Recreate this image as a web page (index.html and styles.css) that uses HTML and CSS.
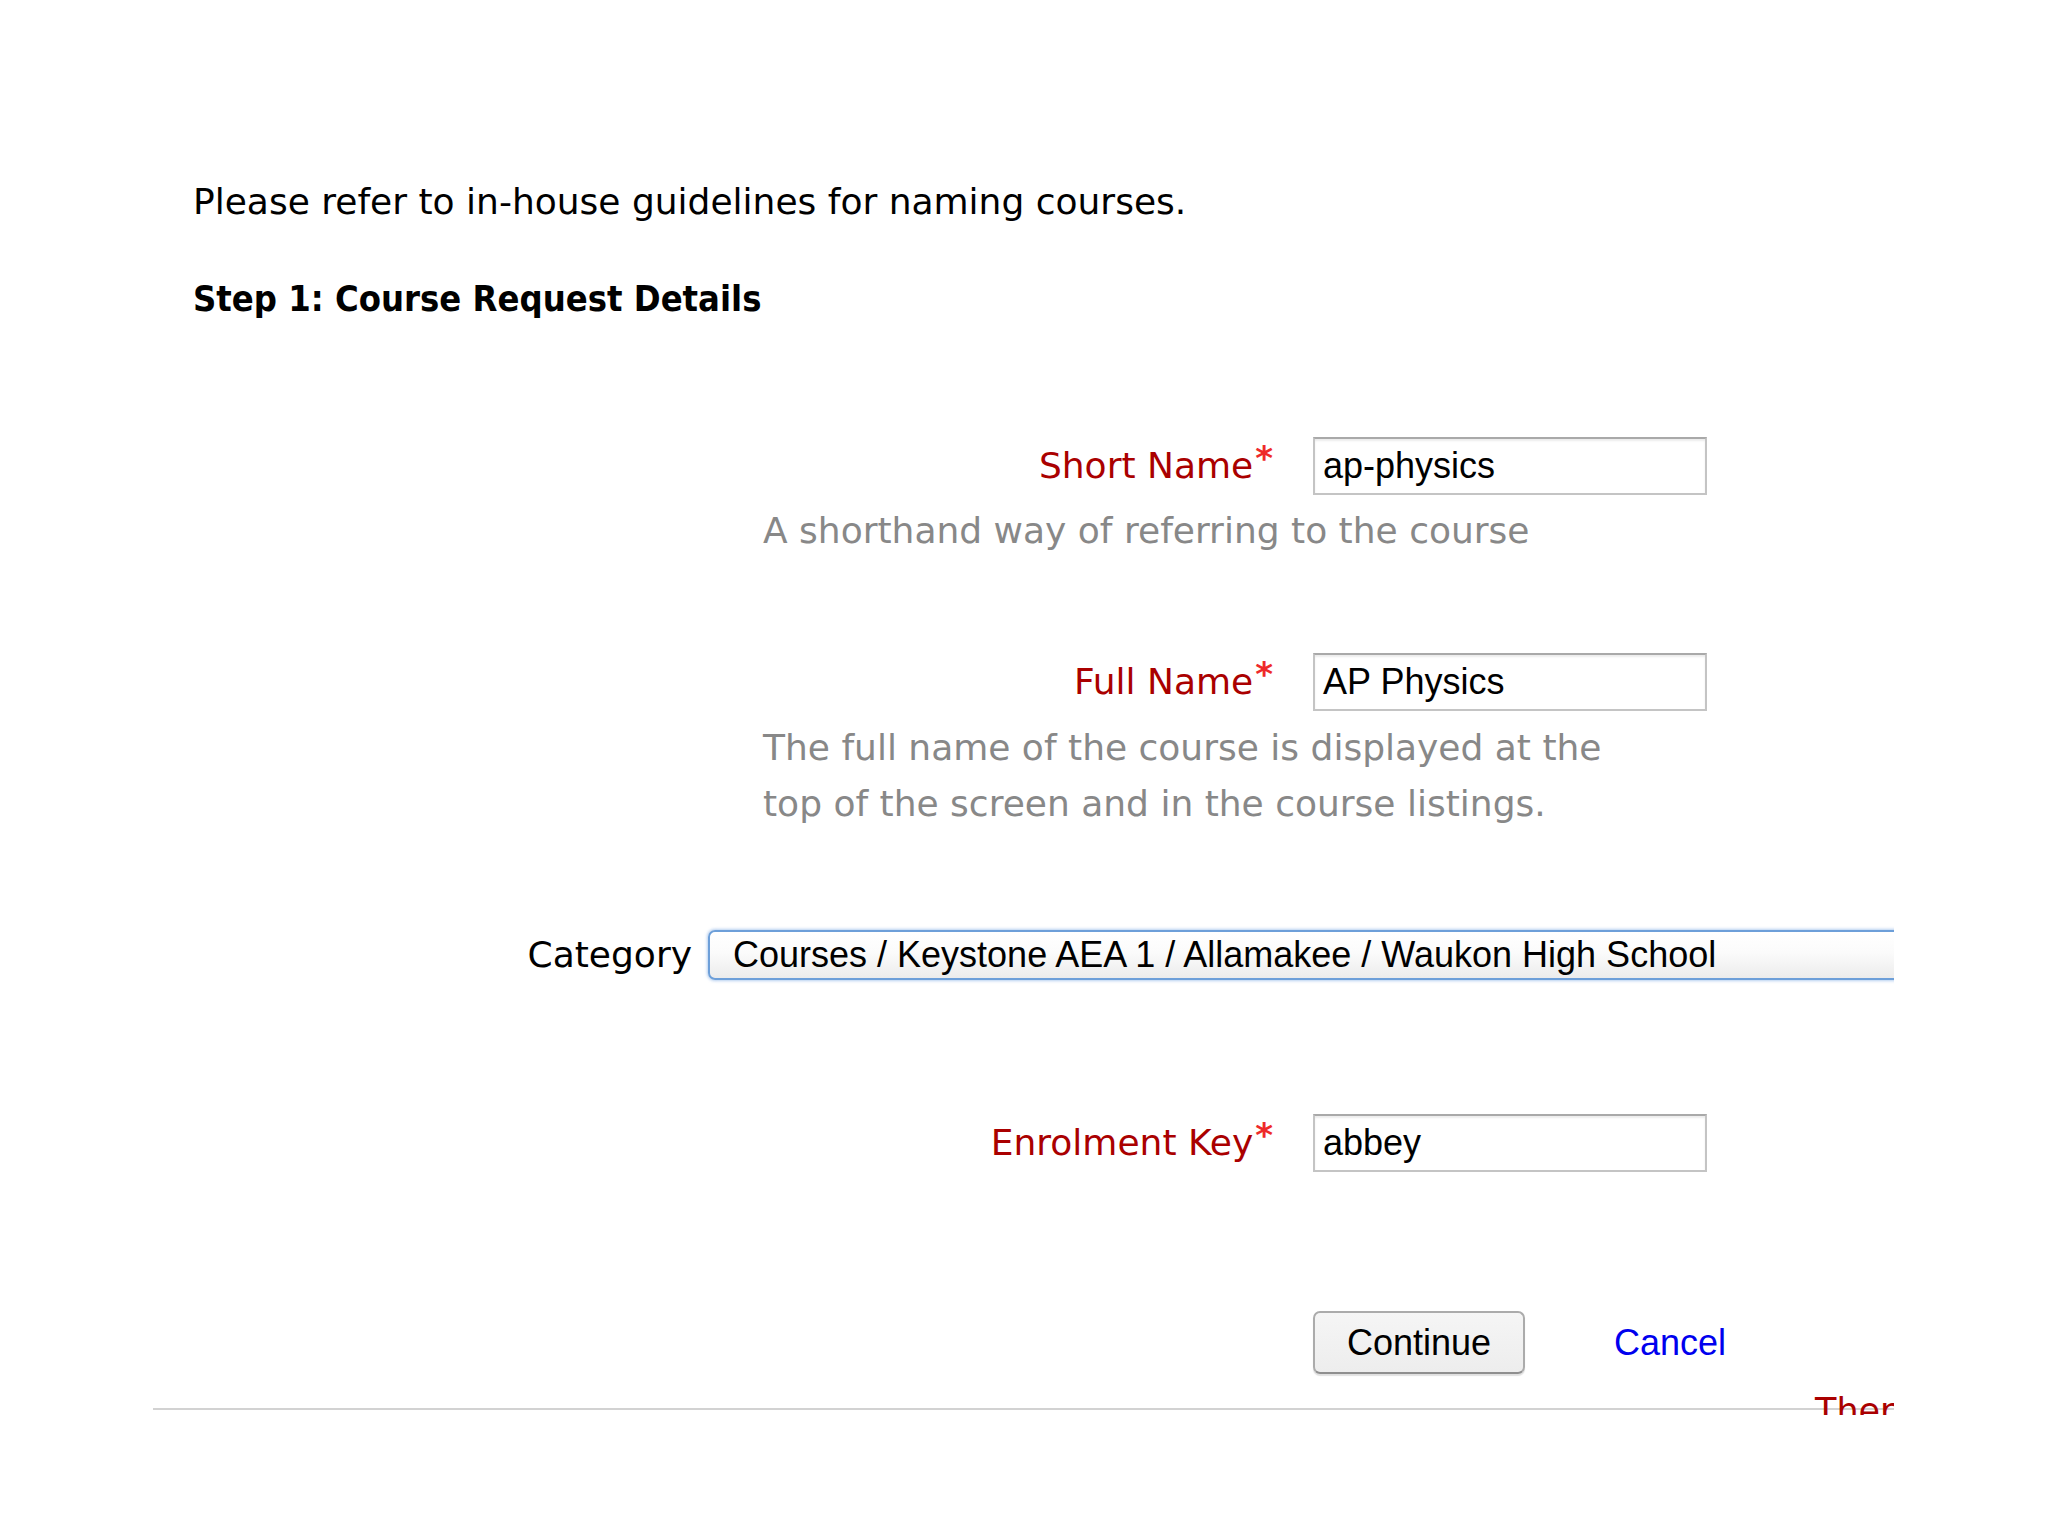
FILE: index.html
```html
<!DOCTYPE html>
<html>
<head>
<meta charset="utf-8">
<title>Course Request</title>
<link rel="stylesheet" href="styles.css">
</head>
<body>
<div class="page">
  <div class="intro">
    <p class="note">Please refer to in-house guidelines for naming courses.</p>
    <h2 class="step">Step 1: Course Request Details</h2>
  </div>

  <div class="field field-short">
    <label class="label req">Short Name<span class="star">*</span></label>
    <div class="input">ap-physics</div>
  </div>
  <div class="help help-short">A shorthand way of referring to the course</div>

  <div class="field field-full">
    <label class="label req">Full Name<span class="star">*</span></label>
    <div class="input">AP Physics</div>
  </div>
  <div class="help help-full">The full name of the course is displayed at the<br>top of the screen and in the course listings.</div>

  <div class="field field-cat">
    <label class="label label-cat">Category</label>
    <div class="select">Courses / Keystone AEA 1 / Allamakee / Waukon High School</div>
  </div>

  <div class="field field-key">
    <label class="label req">Enrolment Key<span class="star">*</span></label>
    <div class="input">abbey</div>
  </div>

  <div class="buttons">
    <button class="btn">Continue</button>
    <a class="cancel" href="#">Cancel</a>
  </div>

  <div class="footer">
    <span class="reqnote">There are required fields in this form marked *</span>
  </div>
</div>
</body>
</html>
```

FILE: styles.css
```css
html, body {
  margin: 0;
  padding: 0;
  background: #ffffff;
}

.page {
  margin-left: 153px;
  width: 1741px;
  height: 1415px;
  overflow: hidden;
  padding-top: 174px;
  box-sizing: border-box;
  font-family: "DejaVu Sans", Verdana, sans-serif;
  font-size: 36px;
  color: #000;
}

.intro {
  padding-left: 40px;
}

.note {
  margin: 0;
  line-height: 56px;
}

.step {
  margin: 41px 0 0 0;
  font-family: "DejaVu Sans Condensed", "DejaVu Sans", Verdana, sans-serif;
  font-size: 36px;
  font-weight: bold;
  line-height: 56px;
}

.field {
  display: flex;
  align-items: center;
}

.label {
  width: 1120px;
  text-align: right;
  box-sizing: border-box;
  flex: none;
  line-height: 56px;
}

.req {
  color: #aa0000;
}

.star {
  color: #ee2a2a;
  font-size: 34px;
  font-weight: bold;
  position: relative;
  top: -8px;
  margin-left: 2px;
  line-height: 0;
}

.input {
  margin-left: 40px;
  width: 394px;
  height: 58px;
  box-sizing: border-box;
  border: 2px solid #c4c4c4;
  border-top-color: #a9a9a9;
  box-shadow: inset 0 2px 2px rgba(0, 0, 0, 0.08);
  font-family: "Liberation Sans", Arial, sans-serif;
  font-size: 36px;
  line-height: 54px;
  padding-left: 8px;
  color: #000;
}

.field-short {
  margin-top: 110px;
}

.help {
  margin-left: 610px;
  color: #888888;
  line-height: 56px;
}

.help-short {
  margin-top: 8px;
}

.field-full {
  margin-top: 94px;
}

.help-full {
  margin-top: 9px;
}

.field-cat {
  margin-top: 95px;
}

.label-cat {
  width: 539px;
}

.select {
  margin-left: 16px;
  flex: none;
  width: 1300px;
  height: 50px;
  box-sizing: border-box;
  border: 2px solid #6d9fd9;
  border-radius: 7px;
  box-shadow: 0 0 3px 1px rgba(120, 165, 225, 0.55);
  background: linear-gradient(#ffffff, #fbfbfb 45%, #ececec);
  font-family: "Liberation Sans", Arial, sans-serif;
  font-size: 36px;
  line-height: 46px;
  padding-left: 23px;
  color: #000;
}

.field-key {
  margin-top: 131px;
}

.buttons {
  margin-top: 139px;
  display: flex;
  align-items: center;
  padding-left: 1160px;
}

.btn {
  width: 212px;
  height: 63px;
  box-sizing: border-box;
  border: 2px solid #ababab;
  border-bottom-color: #8f8f8f;
  border-radius: 7px;
  background: linear-gradient(#f5f5f5, #ededed);
  box-shadow: 0 2px 1px rgba(0, 0, 0, 0.12);
  font-family: "Liberation Sans", Arial, sans-serif;
  font-size: 36px;
  color: #000;
  padding: 0;
}

.cancel {
  margin-left: 89px;
  font-family: "Liberation Sans", Arial, sans-serif;
  font-size: 36px;
  color: #0000ee;
  text-decoration: none;
}

.footer {
  margin-top: 34px;
  border-top: 2px solid #d2d2d2;
  position: relative;
}

.reqnote {
  position: absolute;
  left: 1662px;
  top: -19px;
  white-space: nowrap;
  color: #aa0000;
  font-size: 35px;
  line-height: 40px;
}
```
